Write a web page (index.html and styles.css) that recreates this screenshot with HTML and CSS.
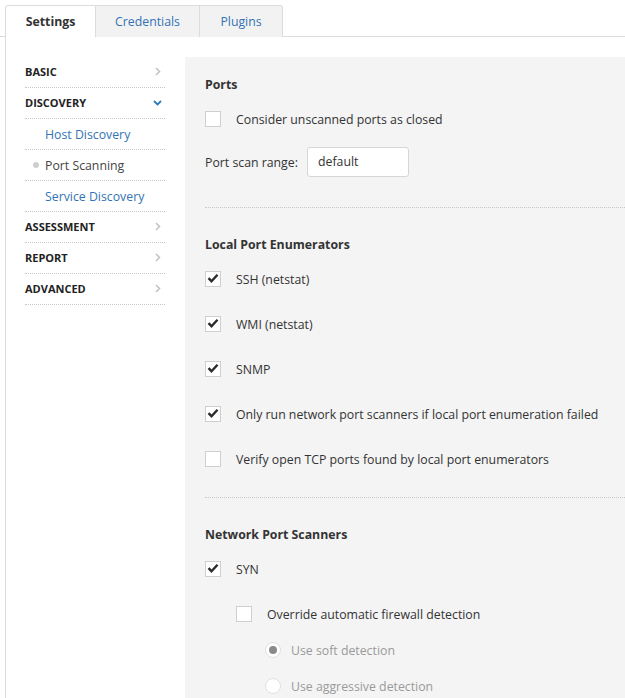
FILE: index.html
```html
<!DOCTYPE html>
<html>
<head>
<meta charset="utf-8">
<link rel="stylesheet" href="styles.css">
</head>
<body>
<div class="tabs">
  <div class="tab active">Settings</div>
  <div class="tab">Credentials</div>
  <div class="tab">Plugins</div>
</div>
<div class="panel">
  <nav class="sidebar">
    <div class="nav-row head"><span>BASIC</span><svg class="chev" width="6" height="9" viewBox="0 0 6 9"><path d="M1 1l3.5 3.5L1 8" fill="none" stroke="#c4c4c4" stroke-width="1.6"/></svg></div>
    <div class="nav-row head"><span>DISCOVERY</span><svg class="chev-down" width="9" height="6" viewBox="0 0 9 6"><path d="M1 1l3.5 3.5L8 1" fill="none" stroke="#2f7ab9" stroke-width="1.8"/></svg></div>
    <div class="nav-row sub link">Host Discovery</div>
    <div class="nav-row sub current"><span class="dot"></span>Port Scanning</div>
    <div class="nav-row sub link">Service Discovery</div>
    <div class="nav-row head"><span>ASSESSMENT</span><svg class="chev" width="6" height="9" viewBox="0 0 6 9"><path d="M1 1l3.5 3.5L1 8" fill="none" stroke="#c4c4c4" stroke-width="1.6"/></svg></div>
    <div class="nav-row head"><span>REPORT</span><svg class="chev" width="6" height="9" viewBox="0 0 6 9"><path d="M1 1l3.5 3.5L1 8" fill="none" stroke="#c4c4c4" stroke-width="1.6"/></svg></div>
    <div class="nav-row head"><span>ADVANCED</span><svg class="chev" width="6" height="9" viewBox="0 0 6 9"><path d="M1 1l3.5 3.5L1 8" fill="none" stroke="#c4c4c4" stroke-width="1.6"/></svg></div>
  </nav>
  <main class="content">
    <section class="section first">
      <h3>Ports</h3>
      <div class="row"><span class="box"></span><span class="label">Consider unscanned ports as closed</span></div>
      <div class="row input-row"><span class="field-label">Port scan range:</span><span class="input">default</span></div>
    </section>
    <section class="section">
      <h3>Local Port Enumerators</h3>
      <div class="row"><span class="box checked"><svg width="12" height="10" viewBox="0 0 12 10"><path d="M1.5 5.2l3 3L10.5 1.8" fill="none" stroke="#2b2b2b" stroke-width="2.4"/></svg></span><span class="label">SSH (netstat)</span></div>
      <div class="row"><span class="box checked"><svg width="12" height="10" viewBox="0 0 12 10"><path d="M1.5 5.2l3 3L10.5 1.8" fill="none" stroke="#2b2b2b" stroke-width="2.4"/></svg></span><span class="label">WMI (netstat)</span></div>
      <div class="row"><span class="box checked"><svg width="12" height="10" viewBox="0 0 12 10"><path d="M1.5 5.2l3 3L10.5 1.8" fill="none" stroke="#2b2b2b" stroke-width="2.4"/></svg></span><span class="label">SNMP</span></div>
      <div class="row"><span class="box checked"><svg width="12" height="10" viewBox="0 0 12 10"><path d="M1.5 5.2l3 3L10.5 1.8" fill="none" stroke="#2b2b2b" stroke-width="2.4"/></svg></span><span class="label">Only run network port scanners if local port enumeration failed</span></div>
      <div class="row"><span class="box"></span><span class="label">Verify open TCP ports found by local port enumerators</span></div>
    </section>
    <section class="section last">
      <h3>Network Port Scanners</h3>
      <div class="row"><span class="box checked"><svg width="12" height="10" viewBox="0 0 12 10"><path d="M1.5 5.2l3 3L10.5 1.8" fill="none" stroke="#2b2b2b" stroke-width="2.4"/></svg></span><span class="label">SYN</span></div>
      <div class="row indent"><span class="box"></span><span class="label">Override automatic firewall detection</span></div>
      <div class="row radio-row"><span class="radio on"></span><span class="label muted">Use soft detection</span></div>
      <div class="row radio-row"><span class="radio"></span><span class="label muted">Use aggressive detection</span></div>
    </section>
  </main>
</div>
</body>
</html>
```
FILE: styles.css
```css
* { box-sizing: border-box; }
html, body { margin: 0; padding: 0; }
body {
  background: #fff;
  font-family: "Open Sans", "Noto Sans", sans-serif;
  font-size: 12px;
  color: #333;
  width: 625px;
  height: 698px;
  overflow: hidden;
}
.tabs {
  display: flex;
  padding: 5px 0 0 5px;
  border-bottom: 1px solid #dcdcdc;
  height: 37px;
}
.tab {
  height: 32px;
  line-height: 32px;
  border: 1px solid #dcdcdc;
  border-left: none;
  border-bottom: none;
  background: #f2f2f2;
  color: #3373b5;
  font-size: 12.3px;
  margin-bottom: -1px;
  text-align: center;
}
.tab:first-child { border-left: 1px solid #dcdcdc; border-radius: 3px 0 0 0; }
.tab:last-child { border-radius: 0 3px 0 0; }
.tab.active {
  background: #fff;
  color: #333;
  font-weight: 700;
  width: 91px;
}
.tab:nth-child(2) { width: 104px; }
.tab:nth-child(3) { width: 83px; }
.panel {
  display: flex;
  margin-left: 5px;
  border-left: 1px solid #dcdcdc;
  padding-top: 20px;
  height: 661px;
}
.sidebar {
  width: 140px;
  margin: 0 20px 0 19px;
  flex-shrink: 0;
}
.nav-row {
  height: 31px;
  border-bottom: 1px dotted #c8c8c8;
  display: flex;
  align-items: center;
  justify-content: space-between;
  padding-right: 4px;
  padding-bottom: 1px;
}
.nav-row.head {
  font-size: 11px;
  font-weight: 700;
  color: #222;
}
.chev-down { margin-right: -1px; }
.nav-row.sub {
  justify-content: flex-start;
  padding-left: 20px;
  padding-bottom: 0;
  font-size: 12.3px;
}
.nav-row.link { color: #3373b5; }
.nav-row.current { color: #444; position: relative; }
.dot {
  position: absolute;
  left: 8px;
  top: 12px;
  width: 6px;
  height: 6px;
  border-radius: 50%;
  background: #cfcfcf;
}
.content {
  flex: 1;
  background: #f4f4f4;
  padding: 19px 0 0 20px;
}
.section {
  border-bottom: 1px dotted #c8c8c8;
  padding-bottom: 30px;
  padding-top: 28px;
}
.section.first { padding-top: 0; padding-bottom: 30px; }
.section.last { border-bottom: none; }
h3 {
  margin: 0;
  font-size: 12.3px;
  font-weight: 700;
  line-height: 18px;
  color: #333;
}
.row {
  display: flex;
  align-items: center;
  height: 16px;
  margin-top: 29px;
}
.section h3 + .row { margin-top: 17px; }
.box {
  width: 16px;
  height: 16px;
  background: #fff;
  border: 1px solid #cfcfcf;
  flex-shrink: 0;
  display: flex;
  align-items: center;
  justify-content: center;
}
.box svg { margin-top: -3px; }
.label {
  margin-left: 15px;
  font-size: 12.3px;
  white-space: nowrap;
  color: #333;
}
.label.muted { color: #9a9a9a; margin-left: 10px; }
.input-row { height: 30px; margin-top: 20px; }
.field-label { font-size: 12.3px; width: 102px; }
.input {
  width: 102px;
  height: 30px;
  background: #fff;
  border: 1px solid #d6d6d6;
  border-radius: 3px;
  padding-left: 10px;
  line-height: 28px;
  font-size: 12.3px;
}
.indent { margin-left: 31px; }
.radio-row { margin-left: 60px; margin-top: 20px; }
.radio {
  width: 16px;
  height: 16px;
  border-radius: 50%;
  border: 1px solid #e0e0e0;
  background: #fff;
  display: flex;
  align-items: center;
  justify-content: center;
}
.radio.on::after {
  content: "";
  width: 8px;
  height: 8px;
  border-radius: 50%;
  background: #8a8a8a;
}
```
